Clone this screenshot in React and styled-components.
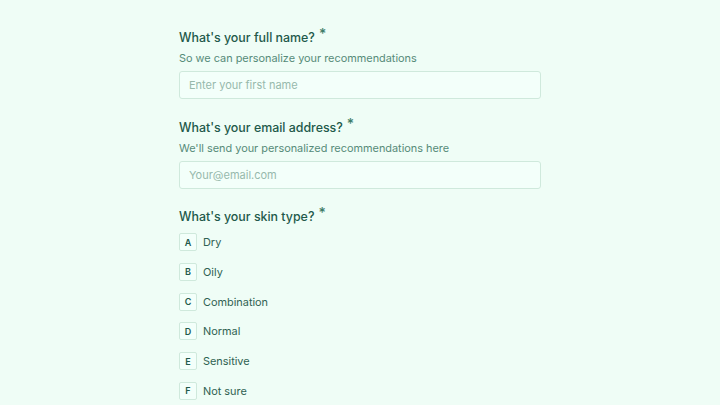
import styled, { createGlobalStyle } from "styled-components";

const GlobalStyle = createGlobalStyle`
  html, body {
    margin: 0;
    padding: 0;
    background: #effdf6;
    font-family: Inter, "Noto Sans", sans-serif;
  }
`;

const Page = styled.div`
  width: 100vw;
  min-height: 100vh;
  background: #effdf6;
  display: flex;
  justify-content: center;
`;

const Form = styled.form`
  width: 362px;
  padding-top: 27px;
  display: flex;
  flex-direction: column;
`;

const Field = styled.div`
  display: flex;
  flex-direction: column;
  margin-bottom: 17.5px;
`;

const Title = styled.label`
  font-size: 12.4px;
  font-weight: 500;
  line-height: 18px;
  color: #22594a;
`;

const Star = styled.span`
  display: inline-block;
  margin-left: 4px;
  font-size: 14px;
  vertical-align: 3px;
  line-height: 1;
  color: #3e7c68;
`;

const Hint = styled.p`
  margin: 3px 0 0;
  font-size: 10.9px;
  line-height: 16px;
  color: #568b79;
`;

const Input = styled.input`
  margin-top: 5px;
  height: 28px;
  box-sizing: border-box;
  padding: 0 9px;
  border: 1px solid #cfe9dc;
  border-radius: 3px;
  background: #f3fffa;
  font-family: inherit;
  font-size: 11px;
  color: #22594a;
  outline: none;

  &::placeholder {
    color: #97b9ac;
  }
`;

const Options = styled.div`
  display: flex;
  flex-direction: column;
  gap: 11.8px;
  margin-top: 7px;
`;

const Option = styled.div`
  display: flex;
  align-items: center;
  gap: 6px;
  height: 18px;
`;

const Key = styled.span`
  width: 18px;
  height: 18px;
  box-sizing: border-box;
  border: 1px solid #cfe9dc;
  border-radius: 2px;
  background: #f3fffa;
  display: flex;
  align-items: center;
  justify-content: center;
  font-size: 9px;
  font-weight: 600;
  color: #22594a;
`;

const OptionLabel = styled.span`
  font-size: 10.9px;
  color: #2f6252;
`;

const skinTypes = ["Dry", "Oily", "Combination", "Normal", "Sensitive", "Not sure"];

const App = () => {
  return (
    <Page>
      <GlobalStyle />
      <Form>
        <Field>
          <Title>
            What's your full name?<Star>*</Star>
          </Title>
          <Hint>So we can personalize your recommendations</Hint>
          <Input placeholder="Enter your first name" />
        </Field>
        <Field>
          <Title>
            What's your email address?<Star>*</Star>
          </Title>
          <Hint>We'll send your personalized recommendations here</Hint>
          <Input placeholder="Your@email.com" />
        </Field>
        <Field>
          <Title>
            What's your skin type?<Star>*</Star>
          </Title>
          <Options>
            {skinTypes.map((type, i) => (
              <Option key={type}>
                <Key>{String.fromCharCode(65 + i)}</Key>
                <OptionLabel>{type}</OptionLabel>
              </Option>
            ))}
          </Options>
        </Field>
      </Form>
    </Page>
  );
};

export default App;
